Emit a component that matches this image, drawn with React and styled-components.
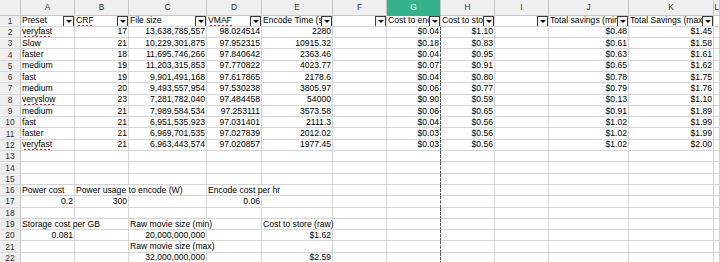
import React from "react";
import styled, { createGlobalStyle, css } from "styled-components";

const GlobalStyle = createGlobalStyle`
  html, body {
    margin: 0;
    padding: 0;
    background: #ffffff;
  }
  body {
    font-family: "Liberation Sans", Arial, sans-serif;
    overflow: hidden;
  }
`;

const COLS = ["A", "B", "C", "D", "E", "F", "G", "H", "I", "J", "K", "L"];

// header row: text, and whether a spell-check squiggle shows
const HEAD = [
  ["Preset"],
  ["CRF", true],
  ["File size"],
  ["VMAF", true],
  ["Encode Time (s)"],
  [""],
  ["Cost to encode"],
  ["Cost to store"],
  [""],
  ["Total savings (min)"],
  ["Total Savings (max)"],
];

const ROWS = [
  ["veryfast", 17, "13,638,785,557", "98.024514", "2280", "$0.04", "$1.10", "$0.48", "$1.45"],
  ["Slow", 21, "10,229,301,875", "97.952315", "10915.32", "$0.18", "$0.83", "$0.61", "$1.58"],
  ["faster", 18, "11,695,746,266", "97.840642", "2363.46", "$0.04", "$0.95", "$0.63", "$1.61"],
  ["medium", 19, "11,203,315,853", "97.770822", "4023.77", "$0.07", "$0.91", "$0.65", "$1.62"],
  ["fast", 19, "9,901,491,168", "97.617865", "2178.6", "$0.04", "$0.80", "$0.78", "$1.75"],
  ["medium", 20, "9,493,557,954", "97.530238", "3805.97", "$0.06", "$0.77", "$0.79", "$1.76"],
  ["veryslow", 23, "7,281,782,040", "97.484458", "54000", "$0.90", "$0.59", "$0.13", "$1.10"],
  ["medium", 21, "7,989,584,534", "97.253111", "3573.58", "$0.06", "$0.65", "$0.91", "$1.89"],
  ["fast", 21, "6,951,535,923", "97.031401", "2111.3", "$0.04", "$0.56", "$1.02", "$1.99"],
  ["faster", 21, "6,969,701,535", "97.027839", "2012.02", "$0.03", "$0.56", "$1.02", "$1.99"],
  ["veryfast", 21, "6,963,443,574", "97.020857", "1977.45", "$0.03", "$0.56", "$1.02", "$2.00"],
];

const MISSPELT = ["veryfast", "veryslow"];

// lower block, rows 13..22: { col index: [text, align, spill] }
const LOWER = {
  16: { 0: ["Power cost", "left"], 1: ["Power usage to encode (W)", "left", true], 3: ["Encode cost per hr", "left", true] },
  17: { 0: ["0.2", "right"], 1: ["300", "right"], 3: ["0.06", "right"] },
  19: { 0: ["Storage cost per GB", "left", true], 2: ["Raw movie size (min)", "left", true], 4: ["Cost to store (raw)", "left", true] },
  20: { 0: ["0.081", "right"], 2: ["20,000,000,000", "right"], 4: ["$1.62", "right"] },
  21: { 2: ["Raw movie size (max)", "left", true] },
  22: { 2: ["32,000,000,000", "right"], 4: ["$2.59", "right"] },
};

const Sheet = styled.div`
  display: grid;
  grid-template-columns: 21px 54px 54px 78px 55px 71px 54px 54px 54px 54px 80px 85px 1fr;
  grid-template-rows: 15.5px repeat(22, 11.3px);
  width: 720px;
  height: 262px;
  overflow: hidden;
  font-size: 8.6px;
  color: #000;
`;

const Corner = styled.div`
  background: #efefef;
  border-right: 1px solid #c6c6c6;
  border-bottom: 1px solid #c6c6c6;
`;

const ColHeader = styled.div`
  display: flex;
  align-items: center;
  justify-content: center;
  background: ${(p) => (p.$active ? "#35b28c" : "#efefef")};
  color: ${(p) => (p.$active ? "#ffffff" : "#333")};
  border-right: 1px solid #c6c6c6;
  border-bottom: 1px solid ${(p) => (p.$active ? "#35b28c" : "#c6c6c6")};
  font-size: 8.4px;
`;

const RowHeader = styled.div`
  display: flex;
  align-items: center;
  justify-content: center;
  background: #efefef;
  color: #333;
  border-right: 1px solid #c6c6c6;
  border-bottom: 1px solid #d9d9d9;
  font-size: 8.4px;
`;

const Cell = styled.div`
  position: relative;
  display: flex;
  align-items: center;
  justify-content: ${(p) => (p.$align === "right" ? "flex-end" : "flex-start")};
  padding: 0 1px 0 1px;
  white-space: nowrap;
  line-height: 11px;
  border-bottom: 1px solid #d4d4d4;
  border-right: 1px solid #d4d4d4;
  overflow: ${(p) => (p.$spill ? "visible" : "hidden")};
  z-index: ${(p) => (p.$spill ? 1 : 0)};
  ${(p) => p.$spill && css`border-right-color: transparent;`}
  ${(p) =>
    p.$pageBreak &&
    css`
      border-right: 1px dashed #505050;
    `}
  ${(p) => p.$filter && css`padding-right: 12px;`}
`;

const Text = styled.span`
  position: relative;
  ${(p) =>
    p.$spell &&
    css`
      &::after {
        content: "";
        position: absolute;
        left: 0;
        right: 0;
        bottom: -1px;
        height: 2px;
        background-image: linear-gradient(135deg, transparent 40%, #e0202a 40%, #e0202a 65%, transparent 65%),
          linear-gradient(45deg, transparent 40%, #e0202a 40%, #e0202a 65%, transparent 65%);
        background-size: 4px 2px;
        background-position: 0 0, 2px 0;
        background-repeat: repeat-x;
      }
    `}
`;

const FilterButton = styled.span`
  position: absolute;
  right: 0;
  top: 0;
  width: 9px;
  height: 9px;
  border: 1px solid #3a3a3a;
  background: #f7f7f7;
  display: flex;
  align-items: center;
  justify-content: center;
  z-index: 2;

  &::after {
    content: "";
    border-left: 3px solid transparent;
    border-right: 3px solid transparent;
    border-top: 3px solid #111;
  }
`;

function RowNumber({ n }) {
  return <RowHeader>{n}</RowHeader>;
}

export default function App() {
  const rows = [];

  // row 1: headers with autofilter buttons
  rows.push(<RowNumber key="r1" n={1} />);
  HEAD.forEach(([label, spell], i) => {
    rows.push(
      <Cell key={`h${i}`} $filter>
        <Text $spell={spell}>{label}</Text>
        <FilterButton />
      </Cell>
    );
  });
  rows.push(<Cell key="h-l" />);

  // rows 2..12: data
  ROWS.forEach((r, ri) => {
    const n = ri + 2;
    const [preset, crf, size, vmaf, time, enc, store, smin, smax] = r;
    const vals = [
      [preset, "left"],
      [crf, "right"],
      [size, "right"],
      [vmaf, "right"],
      [time, "right"],
      ["", "left"],
      [enc, "right"],
      [store, "right"],
      ["", "left"],
      [smin, "right"],
      [smax, "right"],
      ["", "left"],
    ];
    rows.push(<RowNumber key={`r${n}`} n={n} />);
    vals.forEach(([v, align], ci) => {
      rows.push(
        <Cell key={`c${n}-${ci}`} $align={align} $pageBreak={ci === 6}>
          <Text $spell={ci === 0 && MISSPELT.includes(v)}>{v}</Text>
        </Cell>
      );
    });
  });

  // rows 13..22: inputs block
  for (let n = 13; n <= 22; n++) {
    rows.push(<RowNumber key={`r${n}`} n={n} />);
    const line = LOWER[n] || {};
    COLS.forEach((_, ci) => {
      const entry = line[ci];
      rows.push(
        <Cell
          key={`c${n}-${ci}`}
          $align={entry ? entry[1] : "left"}
          $spill={entry && entry[2]}
          $pageBreak={ci === 6}
        >
          {entry ? <Text>{entry[0]}</Text> : null}
        </Cell>
      );
    });
  }

  return (
    <>
      <GlobalStyle />
      <Sheet>
        <Corner />
        {COLS.map((c) => (
          <ColHeader key={c} $active={c === "G"}>
            {c}
          </ColHeader>
        ))}
        {rows}
      </Sheet>
    </>
  );
}
